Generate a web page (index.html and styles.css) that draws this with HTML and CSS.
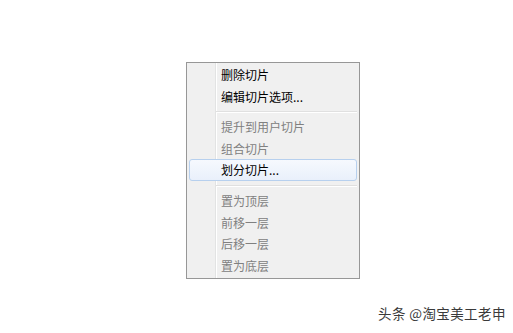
FILE: index.html
```html
<!DOCTYPE html>
<html lang="zh-CN">
<head>
<meta charset="utf-8">
<title>切片菜单</title>
<link rel="stylesheet" href="styles.css">
</head>
<body>
<div class="stage">
  <div class="menu">
    <div class="item">删除切片</div>
    <div class="item">编辑切片选项...</div>
    <div class="sep"></div>
    <div class="item disabled">提升到用户切片</div>
    <div class="item disabled">组合切片</div>
    <div class="item hover">划分切片...</div>
    <div class="sep"></div>
    <div class="item disabled">置为顶层</div>
    <div class="item disabled">前移一层</div>
    <div class="item disabled">后移一层</div>
    <div class="item disabled">置为底层</div>
  </div>
</div>
<div class="watermark">头条 @淘宝美工老申</div>
</body>
</html>
```
FILE: styles.css
```css
html, body {
  margin: 0;
  padding: 0;
  background: #ffffff;
  width: 513px;
  height: 333px;
  overflow: hidden;
  font-family: "Noto Sans CJK SC", "Noto Sans", sans-serif;
}
.stage {
  padding: 62px 0 0 186px;
}
.menu {
  position: relative;
  width: 172px;
  border: 1px solid #979797;
  background: #f0f0f0;
  padding: 1px 0 2px 0;
  box-sizing: content-box;
}
.menu::before {
  content: "";
  position: absolute;
  left: 28px;
  top: 0;
  bottom: 0;
  width: 1px;
  background: #e2e3e3;
  border-right: 1px solid #ffffff;
}
.item {
  position: relative;
  height: 21.5px;
  line-height: 21.5px;
  padding-left: 34px;
  font-size: 12px;
  color: #000000;
  white-space: nowrap;
}
.item.disabled {
  color: #808080;
}
.item.hover {
  margin: 0 2px;
  padding-left: 31px;
  height: 20px;
  line-height: 20px;
  border: 1px solid #b7d0ee;
  border-radius: 3px;
  background: linear-gradient(#f6f9fe, #e9f0fb);
  box-sizing: content-box;
  z-index: 1;
}
.sep {
  height: 9px;
  margin-left: 29px;
  margin-right: 2px;
  position: relative;
}
.sep::after {
  content: "";
  position: absolute;
  left: 0;
  right: 0;
  top: 4px;
  height: 1px;
  background: #e0e0e0;
  border-bottom: 1px solid #ffffff;
}
.watermark {
  position: absolute;
  left: 378px;
  top: 303px;
  font-size: 13.5px;
  color: #3a3a3a;
  letter-spacing: 0.4px;
}
```
